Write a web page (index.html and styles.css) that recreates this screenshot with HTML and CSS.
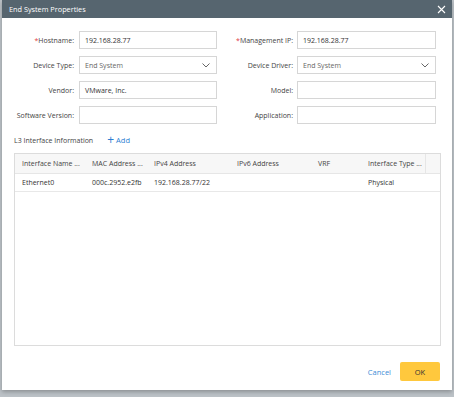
FILE: index.html
```html
<!DOCTYPE html>
<html lang="en">
<head>
    <meta charset="UTF-8">
    <title>End System Properties</title>
    <link rel="stylesheet" href="styles.css">
</head>
<body>
    <div class="dialog">
        <div class="dialog-header">
            <span class="dialog-title">End System Properties</span>
            <svg class="close" width="9" height="9" viewBox="0 0 9 9">
                <path d="M1 1L8 8M8 1L1 8" stroke="#fff" stroke-width="1.1" fill="none"/>
            </svg>
        </div>

        <div class="form-grid">
            <label class="form-label"><span class="req">*</span>Hostname:</label>
            <div class="field">192.168.28.77</div>
            <label class="form-label"><span class="req">*</span>Management IP:</label>
            <div class="field">192.168.28.77</div>

            <label class="form-label">Device Type:</label>
            <div class="field select">
                <span>End System</span>
                <svg width="8" height="5" viewBox="0 0 8 5"><path d="M0.5 0.5L4 4L7.5 0.5" stroke="#666" stroke-width="1" fill="none"/></svg>
            </div>
            <label class="form-label">Device Driver:</label>
            <div class="field select">
                <span>End System</span>
                <svg width="8" height="5" viewBox="0 0 8 5"><path d="M0.5 0.5L4 4L7.5 0.5" stroke="#666" stroke-width="1" fill="none"/></svg>
            </div>

            <label class="form-label">Vendor:</label>
            <div class="field">VMware, Inc.</div>
            <label class="form-label">Model:</label>
            <div class="field"></div>

            <label class="form-label">Software Version:</label>
            <div class="field"></div>
            <label class="form-label">Application:</label>
            <div class="field"></div>
        </div>

        <div class="section-head">
            <span>L3 Interface Information</span>
            <a class="add-link"><span class="plus">+</span>Add</a>
        </div>

        <div class="table-wrap">
            <table class="iface-table">
                <thead>
                    <tr>
                        <th class="c-name">Interface Name ...</th>
                        <th class="c-mac">MAC Address ...</th>
                        <th class="c-ipv4">IPv4 Address</th>
                        <th class="c-ipv6">IPv6 Address</th>
                        <th class="c-vrf">VRF</th>
                        <th class="c-type">Interface Type ...</th>
                        <th class="c-pad"></th>
                    </tr>
                </thead>
                <tbody>
                    <tr>
                        <td>Ethernet0</td>
                        <td>000c.2952.e2fb</td>
                        <td>192.168.28.77/22</td>
                        <td></td>
                        <td></td>
                        <td>Physical</td>
                        <td></td>
                    </tr>
                </tbody>
            </table>
        </div>

        <div class="dialog-footer">
            <a class="btn-link">Cancel</a>
            <button class="btn-ok">OK</button>
        </div>
    </div>
</body>
</html>
```

FILE: styles.css
```css
* {
    margin: 0;
    padding: 0;
    box-sizing: border-box;
}

body {
    font-family: 'Open Sans', 'Noto Sans', sans-serif;
    font-size: 7px;
    color: #333;
    background: #bcc2c7;
    width: 454px;
    height: 397px;
    overflow: hidden;
}

.dialog {
    width: 450px;
    height: 390px;
    margin-left: 2px;
    background: #fff;
    box-shadow: 0 2px 4px rgba(0,0,0,0.25);
    display: flex;
    flex-direction: column;
}

.dialog-header {
    height: 18px;
    background: #56656f;
    color: #fff;
    display: flex;
    align-items: center;
    justify-content: space-between;
    padding: 0 6px 0 7px;
}

.dialog-title {
    font-size: 7.3px;
}

.form-grid {
    display: grid;
    grid-template-columns: 77px 138px 80px 139px;
    grid-auto-rows: 18px;
    row-gap: 7px;
    margin-top: 13px;
}

.form-label {
    display: flex;
    align-items: center;
    justify-content: flex-end;
    padding-right: 5px;
    color: #444;
}

.form-grid .form-label:nth-child(4n+3) {
    padding-right: 4px;
}

.req {
    color: #e0393e;
}

.field {
    border: 1px solid #d6d6d6;
    display: flex;
    align-items: center;
    padding: 0 5px;
    color: #333;
}

.field.select {
    justify-content: space-between;
    color: #666;
    padding-right: 6px;
}

.section-head {
    display: flex;
    align-items: center;
    height: 12px;
    margin: 10px 0 0 12px;
    color: #444;
}

.add-link {
    margin-left: 14px;
    color: #2a7ed2;
    font-size: 7.5px;
    display: flex;
    align-items: center;
}

.plus {
    font-size: 12px;
    margin-right: 2px;
    line-height: 1;
}

.table-wrap {
    margin: 7px 11px 0 12px;
    height: 193px;
    border: 1px solid #dcdcdc;
}

.iface-table {
    width: 100%;
    border-collapse: collapse;
    table-layout: fixed;
}

.iface-table th {
    height: 19px;
    background: #f7f7f7;
    font-weight: normal;
    text-align: left;
    padding-left: 7px;
    color: #444;
    border-bottom: 1px solid #e6e6e6;
}

.iface-table td {
    height: 18px;
    padding-left: 7px;
    border-bottom: 1px solid #e8e8e8;
}

.c-name { width: 70px; }
.c-mac { width: 62px; }
.c-ipv4 { width: 83px; }
.c-ipv6 { width: 81px; }
.c-vrf { width: 50px; }
.c-type { width: 64px; border-right: 1px solid #e6e6e6; }

.dialog-footer {
    display: flex;
    justify-content: flex-end;
    align-items: center;
    margin-top: 16px;
    padding-right: 12px;
    gap: 9px;
}

.btn-link {
    color: #3c8dd6;
    font-size: 7.5px;
}

.btn-ok {
    width: 40px;
    height: 19px;
    background: #ffc83d;
    border: none;
    border-radius: 2px;
    font-family: inherit;
    font-size: 7.5px;
    color: #333;
}
```
